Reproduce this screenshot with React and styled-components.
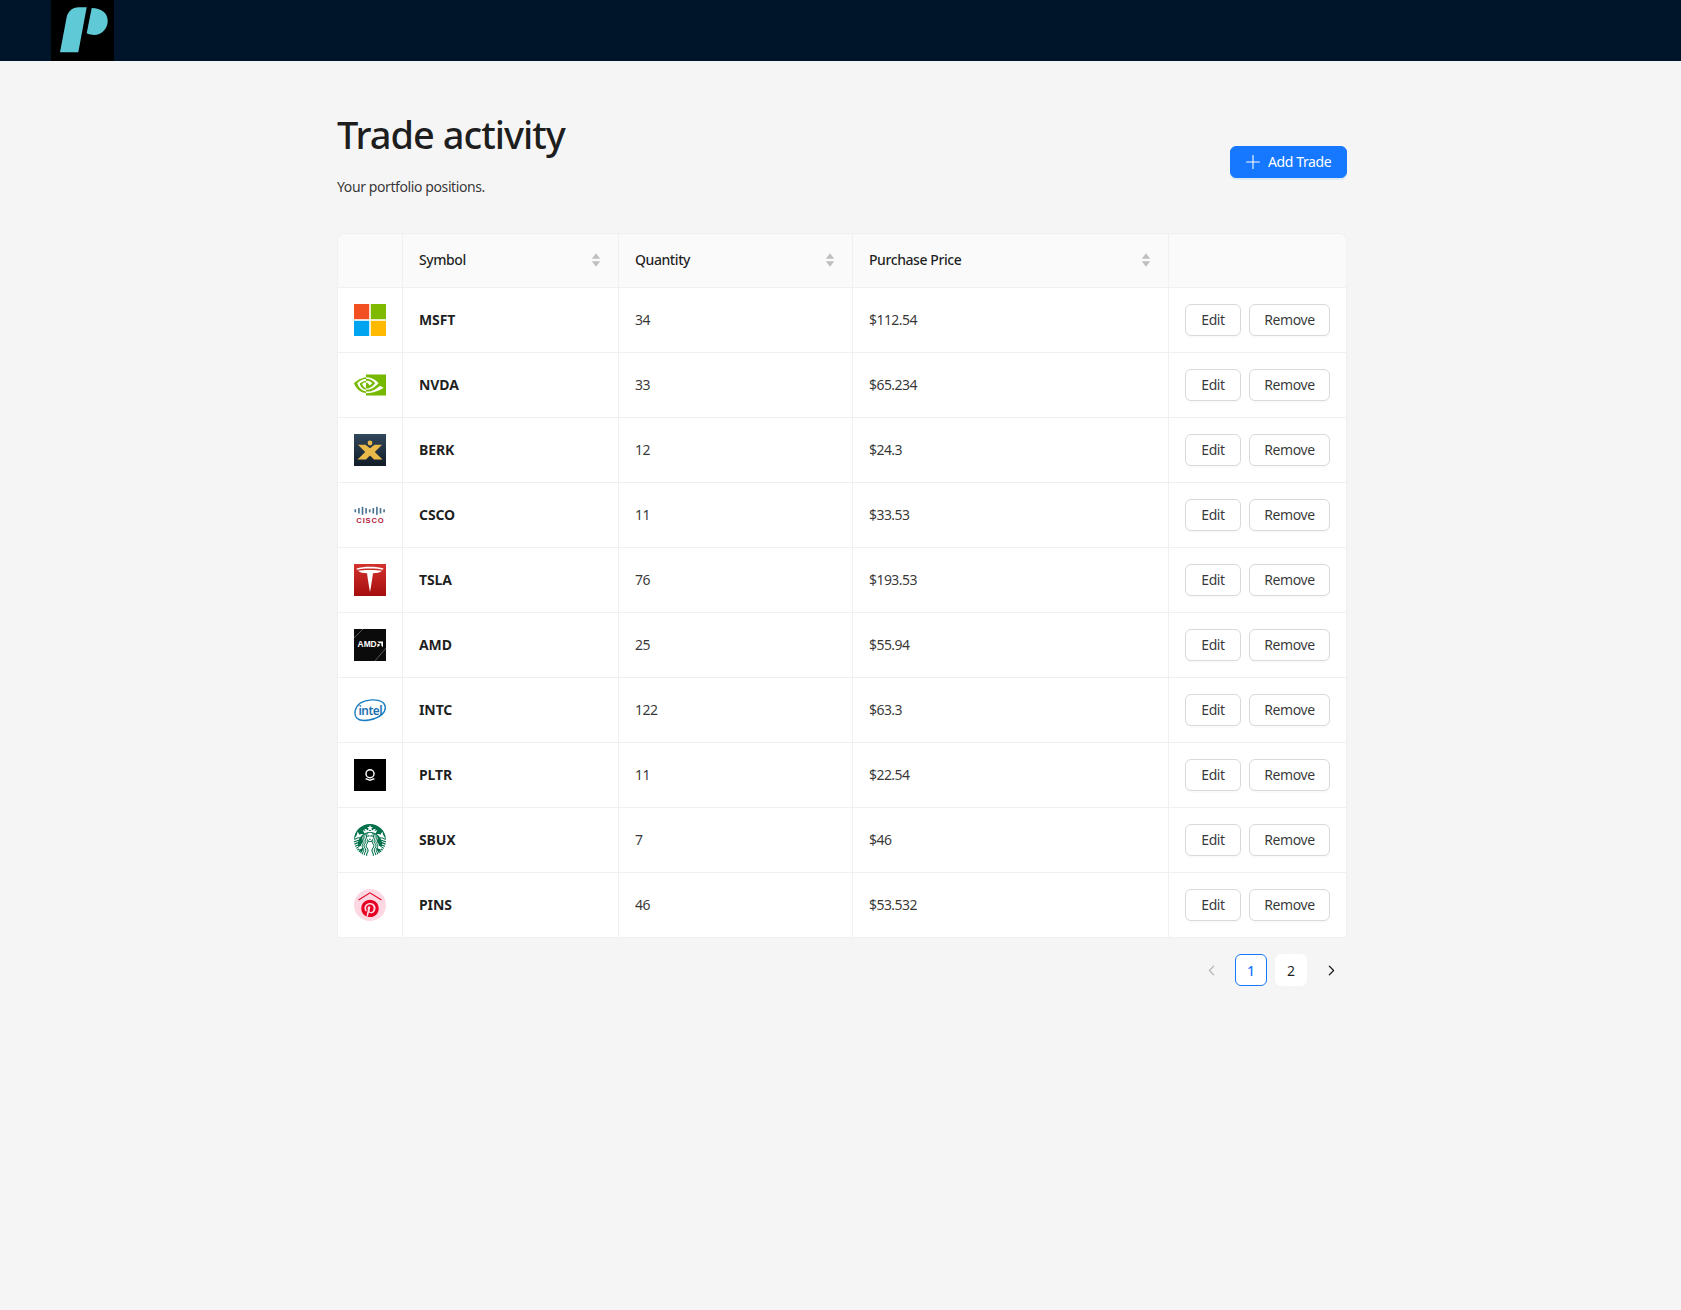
import React from 'react';
import styled, { createGlobalStyle } from 'styled-components';
import { Plus, ChevronLeft, ChevronRight } from 'lucide-react';
import { FaPinterest } from 'react-icons/fa';
import { SiNvidia, SiStarbucks, SiPalantir } from 'react-icons/si';

const Global = createGlobalStyle`
  html, body { margin: 0; padding: 0; background: #f5f5f5; }
  body { font-family: "Noto Sans", "Open Sans", sans-serif; font-size: 14px; color: rgba(0,0,0,.88); min-height: 1310px; }
  * { box-sizing: border-box; }
`;
const Header = styled.header`height: 61px; background: #001529; padding-left: 51px; display: flex;`;
const LogoBox = styled.div`width: 63px; height: 61px; background: #000; display: flex;`;
const Main = styled.main`padding: 46px 334px 0 337px;`;
const TitleRow = styled.div`display: flex; justify-content: space-between; align-items: flex-start; margin-bottom: 35px;`;
const Title = styled.h1`margin: 0 0 15px; font-size: 38px; font-weight: 500; line-height: 54px; letter-spacing: -1px; color: rgba(0,0,0,.88);`;
const Sub = styled.p`margin: 0; font-size: 14px; line-height: 22px; letter-spacing: -0.4px; color: rgba(0,0,0,.8);`;
const BaseButton = styled.button`
  height: 32px; border-radius: 6px; font-family: inherit; font-size: 14px; letter-spacing: -0.4px;
  display: inline-flex; align-items: center; cursor: pointer;
`;
const PrimaryButton = styled(BaseButton)`
  width: 117px; margin-top: 39px; padding: 0 0 2px 11px; background: #1677ff; color: #fff; border: 1px solid #1677ff;
  gap: 4px; justify-content: flex-start; box-shadow: 0 2px 0 rgba(5,145,255,.1);
  svg { margin-top: 1px; }
`;
const GhostButton = styled(BaseButton)`
  width: ${p => p.$w}px; padding: 0 0 2px; justify-content: center; background: #fff; color: rgba(0,0,0,.8);
  border: 1px solid #d9d9d9; box-shadow: 0 2px 0 rgba(0,0,0,.02);
`;
const Card = styled.div`background: #fff; border-radius: 8px 8px 0 0; overflow: hidden; border: 1px solid #f0f0f0; border-bottom: 0;`;
const Table = styled.table`width: 100%; border-collapse: separate; border-spacing: 0; table-layout: fixed;`;
const Th = styled.th`
  height: 54px; padding: 15px 17px 17px 16px; background: #fafafa; text-align: left; font-weight: 500; letter-spacing: -0.42px;
  border-bottom: 1px solid #f0f0f0; border-right: 1px solid #f0f0f0;
  &:last-child { border-right: 0; }
`;
const ThInner = styled.div`display: flex; justify-content: space-between; align-items: center;`;
const Td = styled.td`
  height: 65px; padding: 16px; border-bottom: 1px solid #f0f0f0; border-right: 1px solid #f0f0f0; vertical-align: middle;
  &:last-child { border-right: 0; }
`;
const TextTd = styled(Td)`padding: 15px 16px 17px; letter-spacing: -0.55px; color: rgba(0,0,0,.8);`;
const Symbol = styled.span`font-weight: 700; letter-spacing: -0.1px; color: rgba(0,0,0,.88);`;
const Actions = styled.div`display: flex; gap: 8px;`;
const LogoSvg = styled.svg`display: block; width: 32px; height: 32px;`;
const Pager = styled.nav`display: flex; justify-content: flex-end; gap: 8px; margin-top: 16px;`;
const PageItem = styled.div`
  width: 32px; height: 32px; border-radius: 6px; display: flex; align-items: center; justify-content: center;
  background: ${p => p.$plain ? 'transparent' : '#fff'};
  border: 1px solid ${p => p.$active ? '#1677ff' : 'transparent'};
  color: ${p => p.$active ? '#1677ff' : p.$off ? 'rgba(0,0,0,.25)' : 'rgba(0,0,0,.88)'};
  font-weight: ${p => p.$active ? 500 : 400};
`;

const Sorter = () => (
  <svg width="10" height="14" viewBox="0 0 10 14" aria-hidden="true">
    <path d="M5 0.3 L9.2 5.8 H0.8 Z M5 13.7 L0.8 8.2 H9.2 Z" fill="#bfbfbf" />
  </svg>
);

const Msft = () => (
  <LogoSvg viewBox="0 0 32 32">
    <rect width="15.2" height="15.2" fill="#f25022" />
    <rect x="16.8" width="15.2" height="15.2" fill="#7fba00" />
    <rect y="16.8" width="15.2" height="15.2" fill="#00a4ef" />
    <rect x="16.8" y="16.8" width="15.2" height="15.2" fill="#ffb900" />
  </LogoSvg>
);
const Nvda = () => <SiNvidia size={32} color="#76b900" style={{ display: 'block' }} />;
const Berk = () => (
  <LogoSvg viewBox="0 0 32 32">
    <defs>
      <linearGradient id="bk" x1="0" y1="0" x2="0" y2="1">
        <stop offset="0" stopColor="#31475b" />
        <stop offset="1" stopColor="#121c28" />
      </linearGradient>
    </defs>
    <rect width="32" height="32" fill="url(#bk)" />
    <circle cx="16" cy="9" r="2.4" fill="#e9b949" />
    <path d="M4 10.8 H11.5 L16 14.2 L20.5 10.8 H28 L20.8 18 L28.5 25.5 H20 L16 21.6 L12 25.5 H3.5 L11.2 18 Z" fill="#e9b949" />
  </LogoSvg>
);
const barHeights = [3, 5.5, 8, 5.5, 3, 5.5, 8, 5.5, 3];
const Csco = () => (
  <LogoSvg viewBox="0 0 32 32">
    {barHeights.map((h, i) => (
      <rect key={i} x={0.5 + i * 3.6} y={11.8 - h / 2} width="1.6" height={h} fill="#46708e" />
    ))}
    <text x="16.4" y="24.4" textAnchor="middle" fontFamily="Liberation Sans, sans-serif" fontWeight="700" fontSize="7.6" letterSpacing=".8" fill="#b31b3f">CISCO</text>
  </LogoSvg>
);
const Tsla = () => (
  <LogoSvg viewBox="0 0 32 32">
    <defs>
      <linearGradient id="ts" x1="0" y1="0" x2="0" y2="1">
        <stop offset="0" stopColor="#d3322c" />
        <stop offset="1" stopColor="#a50d0e" />
      </linearGradient>
    </defs>
    <rect width="32" height="32" fill="url(#ts)" />
    <path d="M2.5 4.6 C9 2.2 23 2.2 29.5 4.6 L29 5.8 C23 4.2 9 4.2 3 5.8 Z" fill="#fff" />
    <path d="M4 6.8 C9 5.6 23 5.6 28 6.8 C26 8.6 22.5 9.3 19 9.3 C18.2 15 17 23 16 28 C15 23 13.8 15 13 9.3 C9.5 9.3 6 8.6 4 6.8 Z" fill="#fff" />
  </LogoSvg>
);
const Amd = () => (
  <LogoSvg viewBox="0 0 32 32">
    <rect width="32" height="32" fill="#0b0b0b" />
    <path d="M0 9 L9 0 M21 32 L32 19" stroke="#5a5a5a" strokeWidth="1" />
    <text x="3.6" y="18" fontFamily="Liberation Sans, sans-serif" fontWeight="700" fontSize="8.4" fill="#fff">AMD</text>
    <path d="M23.4 12.6 H29 V18.3 L27.3 16.6 V14.3 H25.1 Z M23.4 15 L25.6 15 V16.8 L23.4 18.3 Z" fill="#fff" />
  </LogoSvg>
);
const Intc = () => (
  <LogoSvg viewBox="0 0 32 32">
    <path d="M6 9.2 C13 5.2 23 5 27.5 7.5 C32 10 33 16 28 20.4 C22 25.6 8 29 3 24.2 C-0.8 20.4 1 13 6 9.2" fill="none" stroke="#1a7cc0" strokeWidth="1.4" />
    <text x="4.4" y="20.6" fontFamily="Noto Sans, sans-serif" fontWeight="600" fontSize="11.8" fill="#1a6fb0" letterSpacing="-.4">intel</text>
  </LogoSvg>
);
const Pltr = () => (
  <LogoSvg viewBox="0 0 32 32">
    <rect width="32" height="32" fill="#000" />
    <SiPalantir x="10" y="10" size={12} color="#fff" />
  </LogoSvg>
);
const Sbux = () => <SiStarbucks size={32} color="#00704a" style={{ display: 'block' }} />;
const Pins = () => (
  <LogoSvg viewBox="0 0 32 32">
    <circle cx="16" cy="16" r="16" fill="#fcd8e2" />
    <path d="M4.5 11 L16 3.8 L27.5 11" fill="none" stroke="#e60023" strokeWidth="1.1" />
    <FaPinterest x="7" y="10.4" size={18} color="#e60023" />
  </LogoSvg>
);

const rows = [
  ['MSFT', '34', '$112.54', Msft],
  ['NVDA', '33', '$65.234', Nvda],
  ['BERK', '12', '$24.3', Berk],
  ['CSCO', '11', '$33.53', Csco],
  ['TSLA', '76', '$193.53', Tsla],
  ['AMD', '25', '$55.94', Amd],
  ['INTC', '122', '$63.3', Intc],
  ['PLTR', '11', '$22.54', Pltr],
  ['SBUX', '7', '$46', Sbux],
  ['PINS', '46', '$53.532', Pins],
];

export default function App() {
  return (
    <>
      <Global />
      <Header>
        <LogoBox>
          <svg width="63" height="61" viewBox="0 0 63 61">
            <path d="M9 52.3 L27.3 52.3 L35.7 7.3 L28 7.3 C21 7.3 16.5 12 15.5 18 Z" fill="#5fc9d6" />
            <path d="M40.7 8 C50 8 56.7 13 56.7 21 C56.7 29 50 35 43.3 35 C40.5 35 38 34.5 35.7 33.3 Z" fill="#5fc9d6" />
          </svg>
        </LogoBox>
      </Header>
      <Main>
        <TitleRow>
          <div>
            <Title>Trade activity</Title>
            <Sub>Your portfolio positions.</Sub>
          </div>
          <PrimaryButton><Plus size={22} strokeWidth={1.2} />Add Trade</PrimaryButton>
        </TitleRow>
        <Card>
          <Table>
            <colgroup>
              <col style={{ width: 65 }} />
              <col style={{ width: 216 }} />
              <col style={{ width: 234 }} />
              <col style={{ width: 316 }} />
              <col />
            </colgroup>
            <thead>
              <tr>
                <Th />
                <Th><ThInner>Symbol<Sorter /></ThInner></Th>
                <Th><ThInner>Quantity<Sorter /></ThInner></Th>
                <Th><ThInner>Purchase Price<Sorter /></ThInner></Th>
                <Th />
              </tr>
            </thead>
            <tbody>
              {rows.map(([s, q, p, L]) => (
                <tr key={s}>
                  <Td><L /></Td>
                  <TextTd><Symbol>{s}</Symbol></TextTd>
                  <TextTd>{q}</TextTd>
                  <TextTd>{p}</TextTd>
                  <Td>
                    <Actions>
                      <GhostButton $w={56}>Edit</GhostButton>
                      <GhostButton $w={81}>Remove</GhostButton>
                    </Actions>
                  </Td>
                </tr>
              ))}
            </tbody>
          </Table>
        </Card>
        <Pager>
          <PageItem $plain $off><ChevronLeft size={17} strokeWidth={1.7} /></PageItem>
          <PageItem $active>1</PageItem>
          <PageItem>2</PageItem>
          <PageItem $plain><ChevronRight size={17} strokeWidth={1.7} /></PageItem>
        </Pager>
      </Main>
    </>
  );
}
